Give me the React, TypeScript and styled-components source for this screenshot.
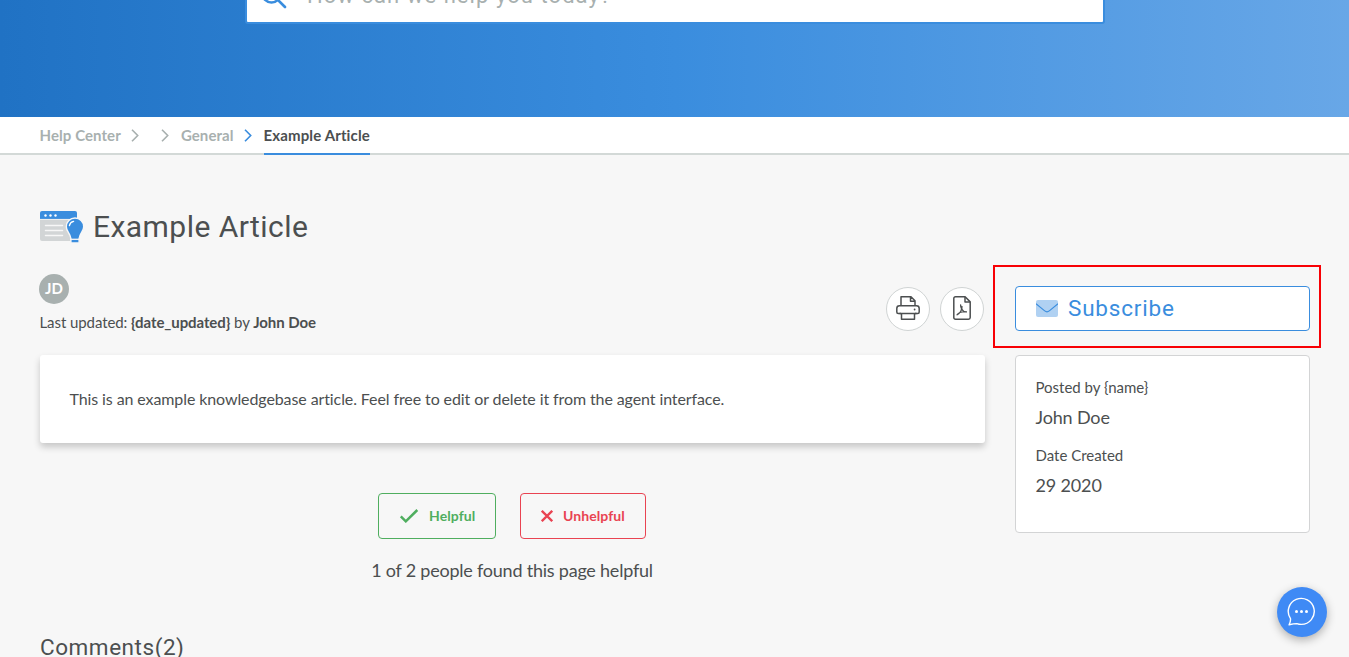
import React from "react";
import styled, { createGlobalStyle } from "styled-components";

const GlobalStyle = createGlobalStyle`
  * { box-sizing: border-box; }
  html, body { margin: 0; height: 100%; overflow: hidden; }
  body { background: #f7f7f7; color: #4c4f50; font-family: Lato, "Open Sans", sans-serif; }
  svg { display: block; flex: none; }
  h1, h2, p { margin: 0; font-weight: 400; }
`;

const heading = `font-family: Roboto, "Liberation Sans", sans-serif;`;

const Page = styled.div`
  height: 657px;
  overflow: hidden;
  position: relative;
`;

const Hero = styled.header`
  height: 117px;
  overflow: hidden;
  display: flex;
  justify-content: center;
  align-items: flex-start;
  background: linear-gradient(90deg, #2072c4 0%, #3a8dde 50%, #68a7e7 100%);
`;

const SearchBox = styled.div`
  width: 860px;
  height: 60px;
  margin: -36px 0 0 1px;
  padding: 3px 0 0 13px;
  display: flex;
  align-items: center;
  gap: 19px;
  background: #fff;
  border: 2px solid #3a8dde;
  border-radius: 3px;
`;

const Placeholder = styled.span`
  ${heading}
  font-size: 22px;
  line-height: 26px;
  letter-spacing: 1.06px;
  color: #a8b0af;
  white-space: nowrap;
`;

const Breadcrumbs = styled.nav`
  height: 38px;
  padding-left: 39.5px;
  display: flex;
  background: #fff;
  border-bottom: 2px solid #d3d9d7;
`;

const Crumb = styled.span<{ $active?: boolean }>`
  height: 38px;
  line-height: 37px;
  font-size: 15px;
  font-weight: 700;
  letter-spacing: ${(p) => (p.$active ? "0.13px" : "0.08px")};
  color: ${(p) => (p.$active ? "#4c4f50" : "#a8b0af")};
  border-bottom: ${(p) => (p.$active ? "2px solid #3a8dde" : "0")};
  white-space: nowrap;
`;

const Separator = styled.span<{ $active?: boolean }>`
  width: 30px;
  display: flex;
  justify-content: center;
  padding: 12px 1px 0 0;
  color: ${(p) => (p.$active ? "#3a8dde" : "#a8b0af")};
`;

const Main = styled.main`
  padding: 50px 39px 0 40px;
`;

const TitleRow = styled.div`
  height: 44px;
  display: flex;
  align-items: center;
  gap: 9px;
`;

const Title = styled.h1`
  ${heading}
  font-size: 30px;
  line-height: 44px;
  letter-spacing: 0.45px;
  white-space: nowrap;
`;

const Columns = styled.div`
  display: grid;
  grid-template-columns: 945px 295px;
  column-gap: 30px;
`;

const ArticleHead = styled.div`
  height: 106px;
  padding-top: 25px;
  display: flex;
  justify-content: space-between;
`;

const Avatar = styled.div`
  width: 30px;
  height: 30px;
  margin-left: -1px;
  border-radius: 50%;
  background: #a8b0af;
  color: #fff;
  font-size: 15px;
  font-weight: 700;
  line-height: 29px;
  text-align: center;
`;

const Updated = styled.p`
  margin: 8px 0 0 -0.5px;
  font-size: 15px;
  line-height: 20px;
  letter-spacing: -0.08px;
  white-space: nowrap;
`;

const Actions = styled.div`
  display: flex;
  gap: 10px;
  padding: 13px 1px 0 0;
`;

const RoundButton = styled.div`
  width: 44px;
  height: 44px;
  display: flex;
  align-items: center;
  justify-content: center;
  padding-bottom: 2px;
  background: #fff;
  border: 1px solid #d0d4d4;
  border-radius: 50%;
`;

const ArticleBody = styled.article`
  height: 88px;
  padding: 0 30px 2px 29.5px;
  display: flex;
  align-items: center;
  font-size: 16px;
  letter-spacing: -0.1px;
  background: #fff;
  border-radius: 3px;
  box-shadow: 0 4px 7px rgba(0, 0, 0, 0.2);
`;

const Votes = styled.div`
  margin: 50px 2px 0 0;
  display: flex;
  justify-content: center;
  gap: 24px;
`;

const VoteButton = styled.div<{ $color: string; $width: number }>`
  width: ${(p) => p.$width}px;
  height: 46px;
  display: flex;
  align-items: center;
  padding: 0 0 1px 20px;
  gap: 10.5px;
  color: ${(p) => p.$color};
  border: 1px solid ${(p) => p.$color};
  border-radius: 4px;
  font-size: 14px;
  font-weight: 700;
  letter-spacing: 0.08px;
`;

const VoteSummary = styled.p`
  margin: 19px 1px 0 0;
  font-size: 18px;
  line-height: 24px;
  letter-spacing: -0.22px;
  text-align: center;
`;

const CommentsTitle = styled.h2`
  ${heading}
  margin-top: 51px;
  font-size: 22.5px;
  line-height: 28px;
  letter-spacing: 0.55px;
`;

const Highlight = styled.div`
  width: 328px;
  height: 83px;
  margin: 16px 0 7px -22px;
  padding: 19px 0 0 20px;
  border: 2px solid #f80005;
`;

const Subscribe = styled.div`
  width: 295px;
  height: 45px;
  padding: 0 0 1px 20px;
  display: flex;
  align-items: center;
  gap: 10px;
  color: #3a8dde;
  background: #fff;
  border: 1px solid #3a8dde;
  border-radius: 4px;
  ${heading}
  font-size: 22.5px;
  line-height: 26px;
  letter-spacing: 0.8px;
`;

const InfoCard = styled.div`
  height: 178px;
  padding: 21px 20px 0 19.5px;
  background: #fff;
  border: 1px solid #d3d4d5;
  border-radius: 4px;
`;

const InfoLabel = styled.p`
  font-size: 15px;
  line-height: 20px;
`;

const InfoValue = styled.p`
  margin: 8px 0 16px;
  font-size: 18px;
  line-height: 24px;
  letter-spacing: -0.15px;
`;

const ChatBubble = styled.div`
  position: absolute;
  left: 1277px;
  top: 587px;
  width: 50px;
  height: 50px;
  display: flex;
  align-items: center;
  justify-content: center;
  padding-right: 2px;
  border-radius: 50%;
  background: #3f8af5;
  box-shadow: 0 3px 10px rgba(0, 0, 0, 0.3);
`;

const SearchIcon = () => (
  <svg width="28" height="28" viewBox="0 0 28 28" fill="none" stroke="#3a8dde" strokeWidth="2.6">
    <circle cx="11.5" cy="11.5" r="9" />
    <path d="M18 18l7 7" strokeLinecap="round" />
  </svg>
);

const Chevron = () => (
  <svg width="8" height="13" viewBox="0 0 8 13" fill="none" stroke="currentColor" strokeWidth="1.6">
    <path d="M1 .8l5.7 5.7L1 12.2" />
  </svg>
);

const ArticleIcon = () => (
  <svg width="44" height="34" viewBox="0 0 44 34">
    <path d="M0 8h37v23H2a2 2 0 0 1-2-2z" fill="#d2d5d6" />
    <path d="M2 1h33a2 2 0 0 1 2 2v6H0V3a2 2 0 0 1 2-2z" fill="#3a8dde" />
    <path d="M0 9.4h37" stroke="#f7f7f7" strokeWidth=".8" />
    <g fill="#fff">
      <circle cx="5.5" cy="5.5" r="1.2" />
      <circle cx="10.5" cy="5.5" r="1.2" />
      <circle cx="15.5" cy="5.5" r="1.2" />
    </g>
    <path d="M5.5 15.5h17M5.5 20.5h17M5.5 25.5h17" stroke="#f7f7f7" strokeWidth="1.5" strokeLinecap="round" />
    <path
      d="M35 8a8.7 8.7 0 0 0-8.7 8.7c0 4.6 3.8 6.3 4.6 11.8v4.5h8.2v-4.5c.8-5.5 4.6-7.2 4.6-11.8A8.7 8.7 0 0 0 35 8z"
      fill="#3a8dde"
      stroke="#f7f7f7"
      strokeWidth="1.4"
    />
    <path d="M30 29.3h10" stroke="#f7f7f7" strokeWidth="1.3" />
    <path d="M29.4 15.6a5.4 5.4 0 0 1 4.2-4.2" stroke="#fff" strokeWidth="1.3" fill="none" strokeLinecap="round" />
  </svg>
);

const PrintIcon = () => (
  <svg width="24" height="24" viewBox="0 0 24 24" fill="none" stroke="#4c4f50" strokeWidth="1.5" strokeLinejoin="round">
    <path d="M5 9.5V.8h10l4 4v4.7M14.5 1v4.2H19" />
    <path d="M5 17.5H2.2C1.2 17.5.8 17 .8 16v-3.5c0-1.7 1-2.7 2.7-2.7h17c1.7 0 2.7 1 2.7 2.7V16c0 1-.4 1.5-1.4 1.5H19" />
    <path d="M3.5 17.5h17M5.5 17.5v5.7h13v-5.7" />
    <circle cx="18.6" cy="13.5" r=".9" fill="#4c4f50" stroke="none" />
  </svg>
);

const PdfIcon = () => (
  <svg width="18" height="24" viewBox="0 0 18 24" fill="none" stroke="#4c4f50" strokeWidth="1.5" strokeLinejoin="round">
    <path d="M2.5.8h9.6l5.1 5.1v15.6c0 1-.7 1.7-1.7 1.7h-13c-1 0-1.7-.7-1.7-1.7v-19C.8 1.5 1.5.8 2.5.8z" />
    <path d="M12 1v5h5" />
    <path
      d="M8 8.5c-.7.8-.2 2.8.5 4.2 1 2 3 3.2 5.5 3.1M9 10c.5 3-2.2 8.2-5 8.8 1-1.8 4-3.3 9.8-3"
      strokeWidth="1.2"
    />
  </svg>
);

const MailIcon = () => (
  <svg width="22" height="18" viewBox="0 0 22 18">
    <rect y="1" width="22" height="17" rx="2" fill="#b0d1f2" />
    <path d="M0 4.7l8.7 7.2c1.5 1.2 3.1 1.2 4.6 0L22 4.7" fill="none" stroke="#3a8dde" strokeWidth="1.1" />
  </svg>
);

const CheckIcon = () => (
  <svg width="20" height="14" viewBox="0 0 20 14" fill="none" stroke="currentColor" strokeWidth="2.5">
    <path d="M1.8 7.3l5 5L18.3 1" />
  </svg>
);

const CrossIcon = () => (
  <svg width="12" height="12" viewBox="0 0 12 12" fill="none" stroke="currentColor" strokeWidth="2.3">
    <path d="M.8.8l10.4 10.4M11.2.8L.8 11.2" />
  </svg>
);

const ChatIcon = () => (
  <svg width="28" height="30" viewBox="0 0 28 30" fill="none" stroke="#fff" strokeWidth="1.4" strokeLinejoin="round">
    <path d="M3.5 21.7A13 13 0 1 1 14.3 27.4c-1.6 0-3.1-.3-4.5-.8-2.5.1-5 .6-7.7 1.2 1-2 1.6-4 1.4-6.1z" />
    <g fill="#fff" stroke="none">
      <circle cx="9.5" cy="14.5" r="1.5" />
      <circle cx="14.5" cy="14.5" r="1.5" />
      <circle cx="19.5" cy="14.5" r="1.5" />
    </g>
  </svg>
);

export default function App() {
  return (
    <Page>
      <GlobalStyle />
      <Hero>
        <SearchBox>
          <SearchIcon />
          <Placeholder>How can we help you today?</Placeholder>
        </SearchBox>
      </Hero>
      <Breadcrumbs>
        <Crumb>Help Center</Crumb>
        <Separator><Chevron /></Separator>
        <Separator><Chevron /></Separator>
        <Crumb>General</Crumb>
        <Separator $active><Chevron /></Separator>
        <Crumb $active>Example Article</Crumb>
      </Breadcrumbs>
      <Main>
        <TitleRow>
          <ArticleIcon />
          <Title>Example Article</Title>
        </TitleRow>
        <Columns>
          <section>
            <ArticleHead>
              <div>
                <Avatar>JD</Avatar>
                <Updated>
                  Last updated: <b>{"{date_updated}"}</b> by <b>John Doe</b>
                </Updated>
              </div>
              <Actions>
                <RoundButton><PrintIcon /></RoundButton>
                <RoundButton><PdfIcon /></RoundButton>
              </Actions>
            </ArticleHead>
            <ArticleBody>
              This is an example knowledgebase article. Feel free to edit or delete it from the agent interface.
            </ArticleBody>
            <Votes>
              <VoteButton $color="#4fae5f" $width={118}><CheckIcon />Helpful</VoteButton>
              <VoteButton $color="#e94352" $width={126}><CrossIcon />Unhelpful</VoteButton>
            </Votes>
            <VoteSummary>1 of 2 people found this page helpful</VoteSummary>
            <CommentsTitle>Comments(2)</CommentsTitle>
          </section>
          <aside>
            <Highlight>
              <Subscribe><MailIcon />Subscribe</Subscribe>
            </Highlight>
            <InfoCard>
              <InfoLabel>Posted by {"{name}"}</InfoLabel>
              <InfoValue>John Doe</InfoValue>
              <InfoLabel>Date Created</InfoLabel>
              <InfoValue>29 2020</InfoValue>
            </InfoCard>
          </aside>
        </Columns>
      </Main>
      <ChatBubble><ChatIcon /></ChatBubble>
    </Page>
  );
}
